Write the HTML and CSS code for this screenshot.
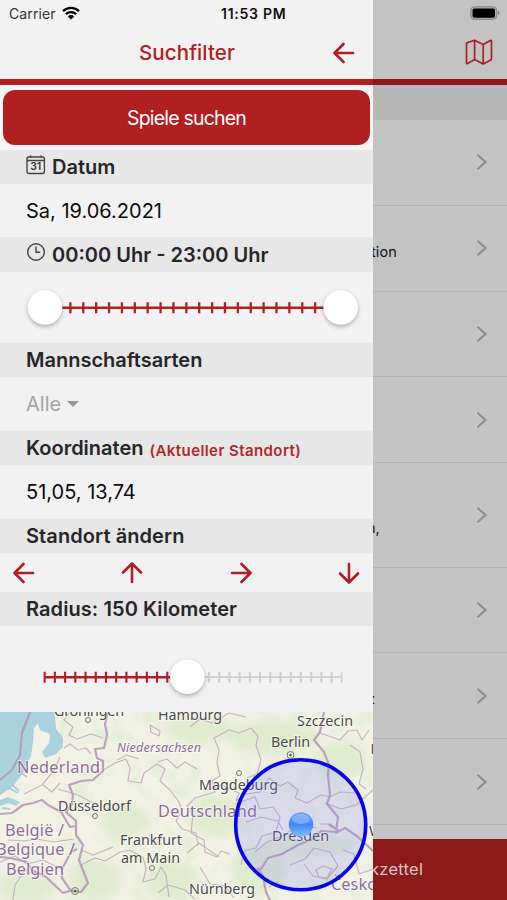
FILE: index.html
```
<!DOCTYPE html>
<html lang="de">
<head>
<meta charset="utf-8">
<title>Suchfilter</title>
<link rel="stylesheet" href="styles.css">
</head>
<body>
<svg class="defs" width="0" height="0" aria-hidden="true">
  <symbol id="arrow" viewBox="0 0 22 22"><path d="M20 11H2M10.500 2L1.500 11l9 9" fill="none" stroke="currentColor" stroke-width="2.600" stroke-linecap="round" stroke-linejoin="round"/></symbol>
  <symbol id="chevron" viewBox="0 0 12 18"><path d="M1.500 1.700L9.500 9l-8 7.300" fill="none" stroke="currentColor" stroke-width="2"/></symbol>
</svg>
<div class="app">
  <aside class="drawer">
    <div class="status">
      <span class="carrier">Carrier</span>
      <svg class="wifi" viewBox="0 0 18 14"><path d="M1 5.200a11.500 11.500 0 0 1 16 0M3.900 8.100a7.400 7.400 0 0 1 10.200 0" fill="none" stroke="#000" stroke-width="2.300"/><path d="M5.800 10.400a4.600 4.600 0 0 1 6.400 0L9 13.600z"/></svg>
      <span class="clock">11:53 PM</span>
    </div>
    <header class="titlebar">
      <h1 class="title">Suchfilter</h1>
      <svg class="back"><use href="#arrow"/></svg>
    </header>
    <div class="action"><button class="search">Spiele suchen</button></div>
    <h2 class="head">
      <svg class="glyph" viewBox="0 0 20 20"><rect x="1" y="2" width="17.400" height="16.500" rx="2"/><path d="M1 5.500h17.400M4.500 .5v2M15 .5v2"/><text class="day" x="9.700" y="15.200">31</text></svg>
      <span>Datum</span>
    </h2>
    <div class="value date"><span>Sa, 19.06.2021</span></div>
    <h2 class="head time">
      <svg class="glyph" viewBox="0 0 20 20"><circle cx="10" cy="10" r="8.300"/><path d="M10 4.500V10.300h4.200"/></svg>
      <span>00:00 Uhr - 23:00 Uhr</span>
    </h2>
    <div class="slider slider-time">
      <svg viewBox="0 0 373 71">
        <path class="on" d="M45 35.800H341"/>
        <path class="on ticks-time" d="M43.500 35.800H342"/>
        <circle class="knob" cx="45" cy="35.500" r="17.300"/><circle class="knob" cx="340.700" cy="35.500" r="17.300"/>
      </svg>
    </div>
    <h2 class="head"><span>Mannschaftsarten</span></h2>
    <div class="value all"><span>Alle</span><i class="caret"></i></div>
    <h2 class="head"><span>Koordinaten</span><small class="note">(Aktueller Standort)</small></h2>
    <div class="value"><span>51,05, 13,74</span></div>
    <h2 class="head move"><span>Standort ändern</span></h2>
    <div class="moves">
      <svg><use href="#arrow"/></svg>
      <svg class="up"><use href="#arrow"/></svg>
      <svg class="right"><use href="#arrow"/></svg>
      <svg class="down"><use href="#arrow"/></svg>
    </div>
    <h2 class="head move"><span>Radius: 150 Kilometer</span></h2>
    <div class="slider slider-radius">
      <svg viewBox="0 0 373 86">
        <path class="off" d="M187 51.200H342"/>
        <path class="off ticks-radius" d="M187.500 51.200H342.500"/>
        <path class="on" d="M44 51.200H187"/>
        <path class="on ticks-radius" d="M43.600 51.200H187"/>
        <circle class="knob" cx="187.400" cy="50.800" r="17.300"/>
      </svg>
    </div>
    <svg class="map" viewBox="0 712 373 188">
      <defs>
        <filter id="soft" x="-20%" y="-20%" width="140%" height="140%"><feGaussianBlur stdDeviation="5"/></filter>
        <filter id="woods" x="0" y="0" width="100%" height="100%"><feTurbulence type="fractalNoise" baseFrequency=".055" numOctaves="4" seed="8"/><feColorMatrix values="0 0 0 0 .73  0 0 0 0 .85  0 0 0 0 .62  2.200 0 0 0 -1.050"/></filter>
        <linearGradient id="ball" x1="0" y1="0" x2="0" y2="1"><stop offset="0" stop-color="#6fa0f6"/><stop offset=".5" stop-color="#4387f4"/><stop offset="1" stop-color="#7fbcff"/></linearGradient>
      </defs>
      <rect class="land" y="712" width="373" height="188"/>
      <g filter="url(#soft)" fill="#d5e6bd" opacity=".6">
        <ellipse cx="125" cy="822" rx="24" ry="15"/><ellipse cx="95" cy="880" rx="26" ry="20"/><ellipse cx="170" cy="880" rx="25" ry="20"/><ellipse cx="200" cy="730" rx="36" ry="12"/><ellipse cx="275" cy="738" rx="45" ry="16"/><ellipse cx="215" cy="815" rx="28" ry="20"/><ellipse cx="260" cy="870" rx="28" ry="22"/><ellipse cx="340" cy="760" rx="26" ry="18"/><ellipse cx="25" cy="887" rx="30" ry="15"/><ellipse cx="310" cy="845" rx="45" ry="10"/>
      </g>
      <rect x="60" y="712" width="313" height="188" filter="url(#woods)"/>
      <g class="sea">
        <path d="M0 712H55L54 718 44 716 38 723 34 728 33 742 31 756 23 773 14 785 8 790 0 795z"/>
        <path d="M36 718L43 714 55 716 56 729 63 738 63 747 56 754 45 758 42 752 49 743 50 734 40 730z"/>
        <path d="M0 800l8-3 12 5-4 4-8-3-8 3z"/>
      </g>
      <path class="inlet" d="M0 791l9-3 9 5M11 784l8 7M2 808l8 1"/>
      <g class="region">
        <path d="M69 713l-5 7 9 7-4 8 8 4 14-5 12 4M64 748l6-4 8 6 8-2 5 6M60 757l-5 12-13 16-18 9M43 785l9 7 8-9M17 770l10 7M58 789l20 6 15 8M8 840l16 1 12-2 18 3 20-3M0 862l15-6 12 8 16-4 18 9M25 870l-10 15-2 15M81 865l14-7 10 3 15-9 10-2M81 850l12 5 20-8"/>
        <path d="M102 771l13-8 11-4 4 9-2 13 13 2 3-10 13-9 8 5-5 12 10 9 9 12 3 9-6 10 6 8 14 4 2 13M158 762l9-3 10 9 8-6 12 7M117 760l10-5 12 4M129 850l14 7 3 12-3 13 12-3 6-12 5 8 3 22M150 725l10 6-1 5-8-4z"/>
        <path d="M190 727l10-8 12 4 17-10 17 4M214 738l15-8 10 3 12-5 7 8-2 9 5 15-4 14-10 4M214 738l5 12-2 13 3 13-8 5 3 11-20 6-8 8 6 9-2 18 13 7 1 12 12 5 4-6 9 3"/>
        <path d="M207 790l15-5 17 8-3 8 10-7 14-2 9-14 11 8 8-4 10 8-3 8 12 5 14-8 9 2 10-5 15 1M235 804l20-7 5 12 13-2 7 10-4 15-14 4-6 12-12 3-3 14M246 822l15-5 17 4 5 9M320 733l20 7 8-9 9-1 5 10 7-10M350 745l10 7 3 17-4 15 7 5M325 803l16 6 15-4 17-15"/>
        <path d="M255 852l12-10 16-6 18-12 15 4M278 882l-9 5M290 865l15-6 9-11 16 4 8 14-11 13-14-3-9-12M316 870l7-4 9 3-5 9-8-1zM320 824l8 0 5 4M343 850l11 4 5 20 14-5M187 853l12-10 20 14M200 867l10 17 15 2 9 12M158 893l10-8 17 5 10 9"/>
      </g>
      <g class="border">
        <path d="M30 712L22 733 20 755 12 770 0 780"/>
        <path d="M108 712l-3 12 2 11-3 13-9 1 2 9 6 3 0 10-10 9-12 1-12 4 4 10-1 9-6 8 10 9 0 14 7 10-4 15 5 13 4 10-7 9-10-1-9-13 0-9 9-17 6-3M0 814l12-1 11-8 10-2 9-3 6 5 13 7 9 15 6-1"/>
        <path d="M0 857l10 1 17 4 5 8 14 7 17 16 7-2"/>
        <path d="M324 712l-4 20-6 8 10 12 5 13-1 10 2 20-3 9 11 13-2 16 9-5 13 9 15 14M336 832l-15-1-8 8-15 6-16 9-14 4-7 11-7 1M258 868l5 8 3 16 4 8M329 824l10 7"/>
      </g>
      <g class="place">
        <g class="dots"><circle cx="88" cy="720" r="2.500"/><circle cx="95" cy="816" r="2.500"/><circle cx="152" cy="868" r="2.500"/><circle cx="239" cy="773" r="2.500"/><circle cx="290.500" cy="755" r="3.500"/><circle cx="75" cy="891" r="3.500"/><circle class="full" cx="290.500" cy="755" r="1"/><circle class="full" cx="75" cy="891" r="1"/></g>
        <text x="54" y="716" textLength="70">Groningen</text>
        <text x="158" y="720" textLength="64">Hamburg</text>
        <text x="297" y="725.500" textLength="56">Szczecin</text>
        <text x="271" y="746.500" textLength="39">Berlin</text>
        <text x="199" y="789.500" textLength="79">Magdeburg</text>
        <text x="58" y="811" textLength="73">Düsseldorf</text>
        <text x="120" y="845" textLength="62">Frankfurt</text>
        <text x="121" y="863" textLength="59">am Main</text>
        <text x="189" y="893.500" textLength="66">Nürnberg</text>
        <text x="272" y="840.500" textLength="57">Dresden</text>
        <text x="370.500" y="754">P</text><text x="369" y="836">W</text>
      </g>
      <g class="country">
        <text x="17" y="772.500" textLength="83">Nederland</text>
        <text x="5" y="835.500" textLength="59">België /</text>
        <text x="-4" y="855" textLength="79">Belgique /</text>
        <text x="6" y="874.500" textLength="58">Belgien</text>
        <text x="158" y="816.500" textLength="99">Deutschland</text>
        <text x="331" y="889.500" textLength="46">Česko</text>
        <text class="state" x="117" y="751.500" textLength="84">Niedersachsen</text>
      </g>
      <circle class="radius" cx="300.700" cy="824.700" r="65"/>
      <circle class="ball" cx="301" cy="824.500" r="12.200"/>
      <ellipse class="shine" cx="301" cy="819" rx="9" ry="5"/>
    </svg>
  </aside>
  <main class="behind">
    <div class="topbar">
      <svg class="battery" viewBox="0 0 30 14"><rect x=".8" y=".8" width="26" height="12.600" rx="3.500" fill="#aaa" stroke="#888"/><rect x="2.600" y="2.500" width="22.400" height="9.200" rx="1.700"/><path d="M28 4.800q3 2.200 0 4.400z" fill="#888"/></svg>
      <svg class="mapicon" viewBox="0 0 28 26"><path d="M1.500 4.800q0-.8.900-1.200L9.600 1.200l8.600 4.300 7.200-4q1.100-.5 1.100.7v17.500q0 .8-.8 1.200l-7.500 4-8.600-4.500-7 4q-1.100.5-1.100-.7zM9.600 1.200v19.200M18.200 5.500v19.400" fill="none" stroke="#a62227" stroke-width="1.700" stroke-linejoin="round"/></svg>
    </div>
    <div class="band"></div>
    <ul class="list">
      <li class="item"><svg><use href="#chevron"/></svg></li>
      <li class="item"><span class="peek tion">tion</span><svg><use href="#chevron"/></svg></li>
      <li class="item"><svg><use href="#chevron"/></svg></li>
      <li class="item"><svg><use href="#chevron"/></svg></li>
      <li class="item tall"><span class="peek cut">n,</span><svg><use href="#chevron"/></svg></li>
      <li class="item"><svg><use href="#chevron"/></svg></li>
      <li class="item"><span class="peek cut-z">z</span><svg><use href="#chevron"/></svg></li>
      <li class="item"><svg><use href="#chevron"/></svg></li>
    </ul>
    <footer class="tabs"><span class="tab">kzettel</span></footer>
  </main>
</div>
</body>
</html>
```
FILE: styles.css
```
* { box-sizing: border-box; }
body { margin: 0; background: #c3c3c3; font-family: Inter, "Liberation Sans", sans-serif; color: #262628; }
h1, h2, ul { margin: 0; padding: 0; list-style: none; }
.defs { display: block; height: 0; }
svg { flex: none; overflow: visible; }
.app { display: grid; grid-template-columns: 373px 134px; width: 507px; height: 900px; overflow: hidden; }
.drawer { display: flex; flex-direction: column; height: 900px; overflow: hidden; background: #f2f2f2; }
.drawer > * { flex: none; }
span, small { white-space: nowrap; }

.status { height: 28px; display: flex; align-items: center; padding: 0 0 1px 9px; }
.carrier { font-size: 14px; letter-spacing: .1px; width: 53px; color: #333; }
.wifi { width: 18px; height: 14px; margin-top: -2px; }
.clock { margin-left: 141px; font-size: 14px; letter-spacing: .75px; font-weight: 600; color: #111; }
.titlebar { height: 57px; display: flex; align-items: center; padding-left: 139px; border-bottom: 6px solid #b02020; color: #b02020; }
.title { width: 194px; padding-bottom: 2px; font-size: 20.500px; letter-spacing: .1px; font-weight: 500; }
.back { width: 22px; height: 22px; margin-bottom: 2px; }
.action { height: 65px; padding: 5px 3px 0; background: #f6f4f4; }
.search { display: block; width: 367px; height: 55px; border: 0; border-radius: 12px; background: #b02020; color: #fff; font: 400 19.500px Inter, sans-serif; letter-spacing: -.8px; }

.head { display: flex; align-items: center; height: 34px; padding-left: 26px; background: #e7e7e7; font-size: 20px; font-weight: 600; }
.time { height: 35px; }
.move { letter-spacing: .08px; }
.glyph { width: 20px; height: 20px; margin: -5px 6px 0 0; fill: none; stroke: #444; stroke-width: 1.400; }
.day { font: 600 10.500px Inter, sans-serif; letter-spacing: 0; text-anchor: middle; fill: #333; stroke: none; }
.value { display: flex; align-items: center; height: 54px; padding-left: 26px; font-size: 20px; color: #0c0c0c; }
.date { height: 53px; }
.note { margin: 4px 0 0 6px; color: #b3272b; font-size: 15px; letter-spacing: .42px; font-weight: 600; }
.all { color: #a5a5a5; }
.caret { margin-left: 6px; border: 6px solid transparent; border-top-color: #999; border-bottom: 0; }

.slider svg { display: block; width: 373px; height: 100%; }
.slider-time { height: 71px; }
.slider-radius { height: 86px; }
.on { stroke: #b02020; stroke-width: 2.400; fill: none; }
.off { stroke: #cfcfcf; stroke-width: 1.800; fill: none; }
.ticks-time { stroke-width: 11; stroke-dasharray: 2.300 10.580; }
.ticks-radius { stroke-width: 11; stroke-dasharray: 2.100 8.120; }
.knob { fill: #fff; filter: drop-shadow(0 2px 2px rgba(0, 0, 0, .28)); }
.moves { display: flex; justify-content: space-between; align-items: center; height: 39px; padding: 0 13px; color: #b02020; }
.moves svg { width: 22px; height: 22px; }
.up { transform: rotate(90deg); }
.right { transform: rotate(180deg); }
.down { transform: rotate(270deg); }

.map { width: 373px; height: 188px; overflow: hidden; }
.land { fill: #f1f1e4; }
.sea { fill: #a9d2de; }
.inlet { fill: none; stroke: #a9d2de; stroke-width: 2; }
.region { fill: none; stroke: #c1a9bf; stroke-width: 1.200; opacity: .85; stroke-linejoin: round; }
.border { fill: none; stroke: #b395b6; stroke-width: 2.200; opacity: .85; stroke-linejoin: round; }
.place, .country { font-family: "Noto Sans", sans-serif; font-size: 14.300px; paint-order: stroke; stroke: rgba(255, 255, 255, .55); stroke-width: 2px; }
.place { fill: #4b4b4b; }
.country { fill: #8f6c99; font-size: 16.300px; }
.state { font-size: 12.500px; font-style: italic; }
.dots { fill: none; stroke: #777; stroke-width: 1; }
.dots .full { fill: #555; }
.radius { fill: rgba(130, 130, 255, .2); stroke: #0404ee; stroke-width: 3.600; }
.ball { fill: url(#ball); }
.shine { fill: #a9c8ff; opacity: .5; }

.behind { display: flex; flex-direction: column; height: 900px; background: #c3c3c3; overflow: hidden; }
.behind > * { flex: none; }
.topbar { display: flex; flex-direction: column; align-items: flex-end; height: 85px; padding: 6px 7px 0 0; border-bottom: 6px solid #8c1a1b; }
.battery { width: 30px; height: 14px; }
.mapicon { width: 28px; height: 26px; margin: 19px 7px 0 0; }
.band { height: 35px; background: #b8b8b8; }
.list { height: 719px; }
.item { display: flex; align-items: center; height: 85.800px; padding-right: 19px; border-bottom: 1px solid #b2b2b2; color: #8c8c8c; }
.tall { height: 104.500px; }
.item svg { width: 12px; height: 18px; margin-left: auto; }
.peek { width: 60px; overflow: hidden; color: #111; font-size: 14.500px; }
.tion { margin: 6px 0 0 -2px; letter-spacing: .1px; }
.cut { margin: 25px 0 0 -6px; }
.cut-z { margin: 6px 0 0 -6px; }
.tabs { height: 61px; padding: 20px 0 0 0; background: #8c1a1b; color: #d6c6c6; font-size: 16.500px; }
.tab { display: block; margin-left: -3px; letter-spacing: .25px; }
```
